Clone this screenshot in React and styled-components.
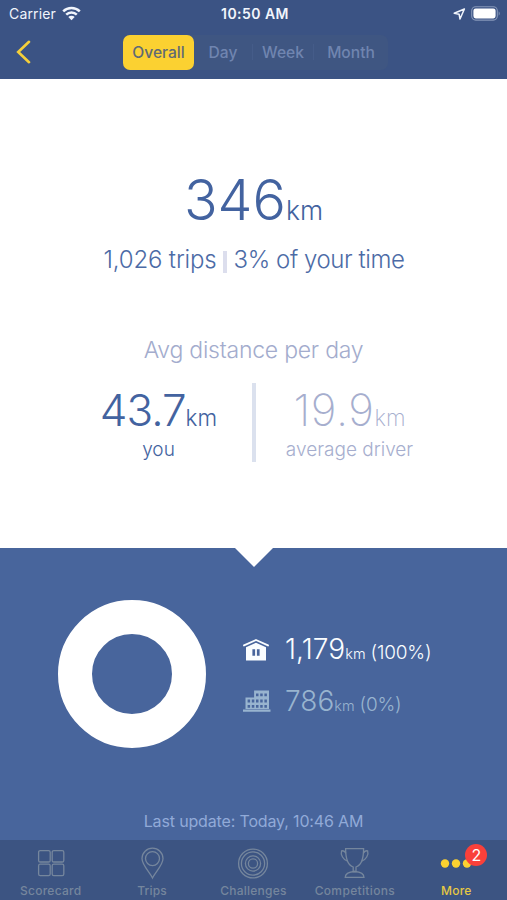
import React from 'react';
import styled, { createGlobalStyle } from 'styled-components';

const Global = createGlobalStyle`
  * { box-sizing: border-box; }
  body { margin: 0; background: #3b5384; }
`;

const Screen = styled.div`
  display: flex;
  flex-direction: column;
  width: 507px;
  height: 900px;
  overflow: hidden;
  background: #fff;
  font-family: Inter, Roboto, sans-serif;
  white-space: nowrap;
`;

const Header = styled.header`
  height: 79px;
  background: #3b5384;
  flex: none;
`;

const StatusBar = styled.div`
  display: grid;
  grid-template-columns: 1fr auto 1fr;
  align-items: center;
  height: 27px;
  padding: 0 6px 0 9px;
  color: #f1f5fc;
  font-size: 14px;
`;

const Carrier = styled.div`
  display: flex;
  align-items: center;
  gap: 6px;
  letter-spacing: 0.15px;
`;

const Clock = styled.div`
  font-weight: 600;
  letter-spacing: 0.45px;
`;

const StatusIcons = styled.div`
  display: flex;
  justify-content: flex-end;
  align-items: center;
  gap: 5px;
`;

const NavBar = styled.nav`
  display: flex;
  align-items: center;
  height: 50px;
  padding-left: 15px;
`;

const BackButton = styled.button`
  display: flex;
  width: 108px;
  padding: 0;
  border: 0;
  background: none;
`;

const Segments = styled.div`
  display: flex;
  align-items: center;
  width: 265px;
  height: 35px;
  border-radius: 7px;
  background: #3f5682;
`;

const Segment = styled.button`
  width: ${(p) => p.$width}px;
  height: 35px;
  padding: 0;
  border: 0;
  border-radius: 7px;
  background: ${(p) => (p.$active ? '#fbd131' : 'transparent')};
  color: ${(p) => (p.$active ? '#5f6a75' : '#7085b0')};
  font: 500 15.6px/35px Inter, sans-serif;
`;

const SegmentRule = styled.span`
  width: 1px;
  height: 16px;
  background: #455c89;
`;

const Summary = styled.main`
  display: flex;
  flex-direction: column;
  align-items: center;
  height: 469px;
  padding-top: 91px;
  color: #4363a0;
  font-weight: 300;
`;

const Total = styled.div`
  height: 60px;
  font-size: 55.5px;
  line-height: 60px;
`;

const Unit = styled.span`
  font-size: ${(p) => p.$size}px;
  letter-spacing: 0;
`;

const Facts = styled.div`
  display: flex;
  align-items: center;
  height: 30px;
  margin-top: 15px;
  padding-left: 1px;
  font-size: 24px;
  line-height: 30px;
  color: #4c6ba6;
`;

const Trips = styled.span`
  letter-spacing: -0.15px;
`;

const FactRule = styled.span`
  width: 4px;
  height: 22px;
  margin: 4px 7px 0 6px;
  background: #dcdeed;
`;

const Share = styled.span`
  letter-spacing: -0.42px;
`;

const AverageTitle = styled.h2`
  height: 30px;
  margin: 60px 0 0;
  font-size: 23px;
  font-weight: 300;
  line-height: 30px;
  letter-spacing: -0.23px;
  color: #a3accd;
`;

const Comparison = styled.div`
  display: grid;
  grid-template-columns: 190px 4px 190px;
  height: 78px;
  margin: 18px 0 0 1px;
`;

const ComparisonRule = styled.div`
  background: #dbe1ee;
`;

const Average = styled.div`
  display: flex;
  flex-direction: column;
  align-items: center;
  padding: ${(p) => (p.$muted ? '0 3px 0 0' : '0 0 0 3px')};
  color: ${(p) => (p.$muted ? '#a6aece' : '#4363a0')};
`;

const AverageValue = styled.div`
  height: 55px;
  font-size: 44px;
  font-weight: ${(p) => (p.$muted ? 250 : 290)};
  line-height: 55px;
  letter-spacing: ${(p) => (p.$muted ? 0.6 : -1)}px;
`;

const AverageLabel = styled.div`
  height: 24px;
  font-size: 19px;
  font-weight: ${(p) => (p.$muted ? 300 : 350)};
  line-height: 24px;
`;

const Breakdown = styled.section`
  display: grid;
  grid-template-columns: 184px 1fr;
  grid-template-rows: 19px 234px 39px;
  height: 292px;
  background: #48659c;
`;

const Notch = styled.div`
  grid-column: 1 / 3;
  justify-self: center;
  width: 38px;
  height: 19px;
  margin-left: 1px;
  background: #fff;
  clip-path: polygon(0 0, 100% 0, 50% 100%);
`;

const Donut = styled.svg`
  display: block;
  width: 150px;
  height: 150px;
  margin: 32px 0 0 57px;
`;

const Legend = styled.div`
  display: flex;
  flex-direction: column;
  gap: 12px;
  padding: 62px 0 0 59px;
`;

const LegendRow = styled.div`
  display: flex;
  align-items: center;
  height: 40px;
  color: ${(p) => (p.$muted ? '#98b4cf' : '#fafdff')};
  font-weight: 300;
`;

const LegendIcon = styled.span`
  display: flex;
  width: 42px;
`;

const Reading = styled.div`
  display: flex;
  align-items: baseline;
  padding-top: 4px;
`;

const Distance = styled.span`
  font-size: 28px;
  line-height: 40px;
  letter-spacing: ${(p) => p.$spacing || 0}px;
`;

const Percent = styled.span`
  font-size: 19px;
  letter-spacing: -0.2px;
  margin-left: 5px;
`;

const Updated = styled.div`
  grid-column: 1 / 3;
  height: 30px;
  margin-top: 5px;
  text-align: center;
  font-size: 16px;
  line-height: 30px;
  letter-spacing: -0.15px;
  color: #91aad8;
`;

const TabBar = styled.footer`
  display: grid;
  grid-template-columns: repeat(5, 1fr);
  height: 60px;
  background: #3c5482;
`;

const Tab = styled.div`
  display: flex;
  flex-direction: column;
  align-items: center;
  padding-top: 6px;
  color: ${(p) => (p.$active ? '#e6c843' : '#75869d')};
`;

const TabIcon = styled.div`
  position: relative;
  display: flex;
  justify-content: center;
  width: 36px;
  height: 34px;
`;

const TabLabel = styled.div`
  height: 20px;
  margin-top: 1px;
  font-size: 12px;
  font-weight: 500;
  line-height: 20px;
  letter-spacing: ${(p) => p.$spacing}px;
`;

const Badge = styled.span`
  position: absolute;
  top: -2px;
  right: -13px;
  width: 22px;
  height: 22px;
  border-radius: 50%;
  background: #f9403a;
  color: #fff;
  font-size: 16px;
  line-height: 22px;
  text-align: center;
`;

const WifiIcon = () => (
  <svg width="19" height="15" viewBox="0 0 19 15" fill="none" stroke="currentColor" strokeWidth="2.5">
    <path d="M1.2 5.4a12 12 0 0 1 16.6 0M4.2 8.6a7.6 7.6 0 0 1 10.6 0" />
    <path d="M9.5 14.2 6.3 11a4.6 4.6 0 0 1 6.4 0Z" fill="currentColor" stroke="none" />
  </svg>
);

const LocationIcon = () => (
  <svg width="13" height="12" viewBox="0 0 13 12" fill="none" stroke="currentColor" strokeWidth="1.5" strokeLinejoin="round">
    <path d="M11.4 1 1.2 5.2l4.9 1 .9 4.800Z" />
  </svg>
);

const BatteryIcon = () => (
  <svg width="30" height="15" viewBox="0 0 30 15">
    <rect x=".7" y=".7" width="25.6" height="13.4" rx="4" fill="none" stroke="#8798b9" strokeWidth="1.1" />
    <rect x="2.4" y="2.4" width="22.2" height="10" rx="2.3" fill="#fff" />
    <path d="M27.7 5.2q2 2.2 0 4.6Z" fill="#8798b9" />
  </svg>
);

const BackIcon = () => (
  <svg width="17" height="24" viewBox="0 0 17 24" fill="none" stroke="#f5cf3a" strokeWidth="2.6" strokeLinecap="round">
    <path d="M14 1.8 3.2 12 14 22.2" />
  </svg>
);

const HomeIcon = () => (
  <svg width="26" height="23" viewBox="0 0 26 23">
    <path d="M1 7.400 13 2l12 5.400" fill="none" stroke="currentColor" strokeWidth="1.9" strokeLinecap="round" strokeLinejoin="round" />
    <path
      d="M3 9.2 13 4.700 23 9.200V22.500H3ZM9.4 11.300v6.500h2.700v-6.500Zm4.500 0v6.500h2.700v-6.500Z"
      fill="currentColor"
      fillRule="evenodd"
    />
  </svg>
);

const OfficeIcon = () => (
  <svg width="28" height="22" viewBox="0 0 28 22">
    <path d="M2.500 7.500h8.600V.5H26v18.500H2.500ZM0 19.600h27.500v2.200H0Z" fill="currentColor" />
    <path d="M13 4.800h11.500" stroke="#48659c" strokeWidth="2.800" strokeDasharray="2.500 1.700" />
    <path d="M4.600 11h20M4.600 16.400h20" stroke="#48659c" strokeWidth="2.800" strokeDasharray="2.500 1.700" />
  </svg>
);

const line = { width: 36, height: 34, viewBox: '0 0 36 34', fill: 'none', stroke: 'currentColor', strokeWidth: 1.3 };

const ScorecardIcon = () => (
  <svg {...line}>
    <rect x="5.6" y="4.6" width="11.6" height="11.4" rx="1.6" />
    <rect x="19.2" y="4.6" width="11.6" height="11.4" rx="1.6" />
    <rect x="5.6" y="18.2" width="11.6" height="11.4" rx="1.6" />
    <rect x="19.2" y="18.2" width="11.6" height="11.4" rx="1.6" />
  </svg>
);

const TripsIcon = () => (
  <svg {...line}>
    <path d="M18.500 32C15.500 26 8 19 8 12.600a10.500 10.500 0 0 1 21 0C29 19 21.500 26 18.500 32Z" />
    <circle cx="18.500" cy="12.600" r="7" />
  </svg>
);

const ChallengesIcon = () => (
  <svg {...line}>
    <circle cx="18" cy="17.500" r="14.400" />
    <circle cx="18" cy="17.500" r="11.600" />
    <circle cx="18" cy="17.500" r="7.600" />
    <circle cx="18" cy="17.500" r="4.600" />
  </svg>
);

const CompetitionsIcon = () => (
  <svg {...line}>
    <path d="M8.600 2.600H26.600C26.600 13 24 19.500 19 21v4.500h-2.800V21C11.200 19.500 8.600 13 8.600 2.600Z" />
    <path d="M8.800 7.200Q7.700 4.500 4.600 4.800C3.200 8.500 6.200 14 11 15.500M26.400 7.200Q27.500 4.500 30.600 4.800C32 8.500 29 14 24.200 15.500M8.200 31.400c0-3 3-5.500 9.400-5.900 6.400.4 9.400 2.900 9.400 5.900Z" />
  </svg>
);

const MoreIcon = () => (
  <svg width="36" height="34" viewBox="0 0 36 34" fill="#fbd131">
    <circle cx="7" cy="17.500" r="4.200" />
    <circle cx="18" cy="17.500" r="4.200" />
    <circle cx="29" cy="17.500" r="4.200" />
  </svg>
);

const tabs = [
  { label: 'Scorecard', Icon: ScorecardIcon, spacing: 0.25 },
  { label: 'Trips', Icon: TripsIcon, spacing: 0.2 },
  { label: 'Challenges', Icon: ChallengesIcon, spacing: 0.25 },
  { label: 'Competitions', Icon: CompetitionsIcon, spacing: 0.35 },
  { label: 'More', Icon: MoreIcon, spacing: 0.2, active: true, badge: 2 },
];

export default function App() {
  return (
    <Screen>
      <Global />
      <Header>
        <StatusBar>
          <Carrier>Carrier <WifiIcon /></Carrier>
          <Clock>10:50 AM</Clock>
          <StatusIcons><LocationIcon /><BatteryIcon /></StatusIcons>
        </StatusBar>
        <NavBar>
          <BackButton aria-label="Back"><BackIcon /></BackButton>
          <Segments>
            <Segment $active $width={71}>Overall</Segment>
            <Segment $width={58}>Day</Segment>
            <SegmentRule />
            <Segment $width={60}>Week</Segment>
            <SegmentRule />
            <Segment $width={74}>Month</Segment>
          </Segments>
        </NavBar>
      </Header>
      <Summary>
        <Total>346<Unit $size={26.5}>km</Unit></Total>
        <Facts>
          <Trips>1,026 trips</Trips>
          <FactRule />
          <Share>3% of your time</Share>
        </Facts>
        <AverageTitle>Avg distance per day</AverageTitle>
        <Comparison>
          <Average>
            <AverageValue>43.7<Unit $size={22.5}>km</Unit></AverageValue>
            <AverageLabel>you</AverageLabel>
          </Average>
          <ComparisonRule />
          <Average $muted>
            <AverageValue $muted>19.9<Unit $size={22.5}>km</Unit></AverageValue>
            <AverageLabel $muted>average driver</AverageLabel>
          </Average>
        </Comparison>
      </Summary>
      <Breakdown>
        <Notch />
        <Donut viewBox="0 0 150 150">
          <circle cx="75" cy="75" r="57" fill="none" stroke="#fff" strokeWidth="34" />
        </Donut>
        <Legend>
          <LegendRow>
            <LegendIcon><HomeIcon /></LegendIcon>
            <Reading>
              <Distance $spacing={0.1}>1,179<Unit $size={14.5}>km</Unit></Distance>
              <Percent>(100%)</Percent>
            </Reading>
          </LegendRow>
          <LegendRow $muted>
            <LegendIcon><OfficeIcon /></LegendIcon>
            <Reading>
              <Distance>786<Unit $size={14.5}>km</Unit></Distance>
              <Percent>(0%)</Percent>
            </Reading>
          </LegendRow>
        </Legend>
        <Updated>Last update: Today, 10:46 AM</Updated>
      </Breakdown>
      <TabBar>
        {tabs.map(({ label, Icon, spacing, active, badge }) => (
          <Tab key={label} $active={active}>
            <TabIcon><Icon />{badge && <Badge>{badge}</Badge>}</TabIcon>
            <TabLabel $spacing={spacing}>{label}</TabLabel>
          </Tab>
        ))}
      </TabBar>
    </Screen>
  );
}
